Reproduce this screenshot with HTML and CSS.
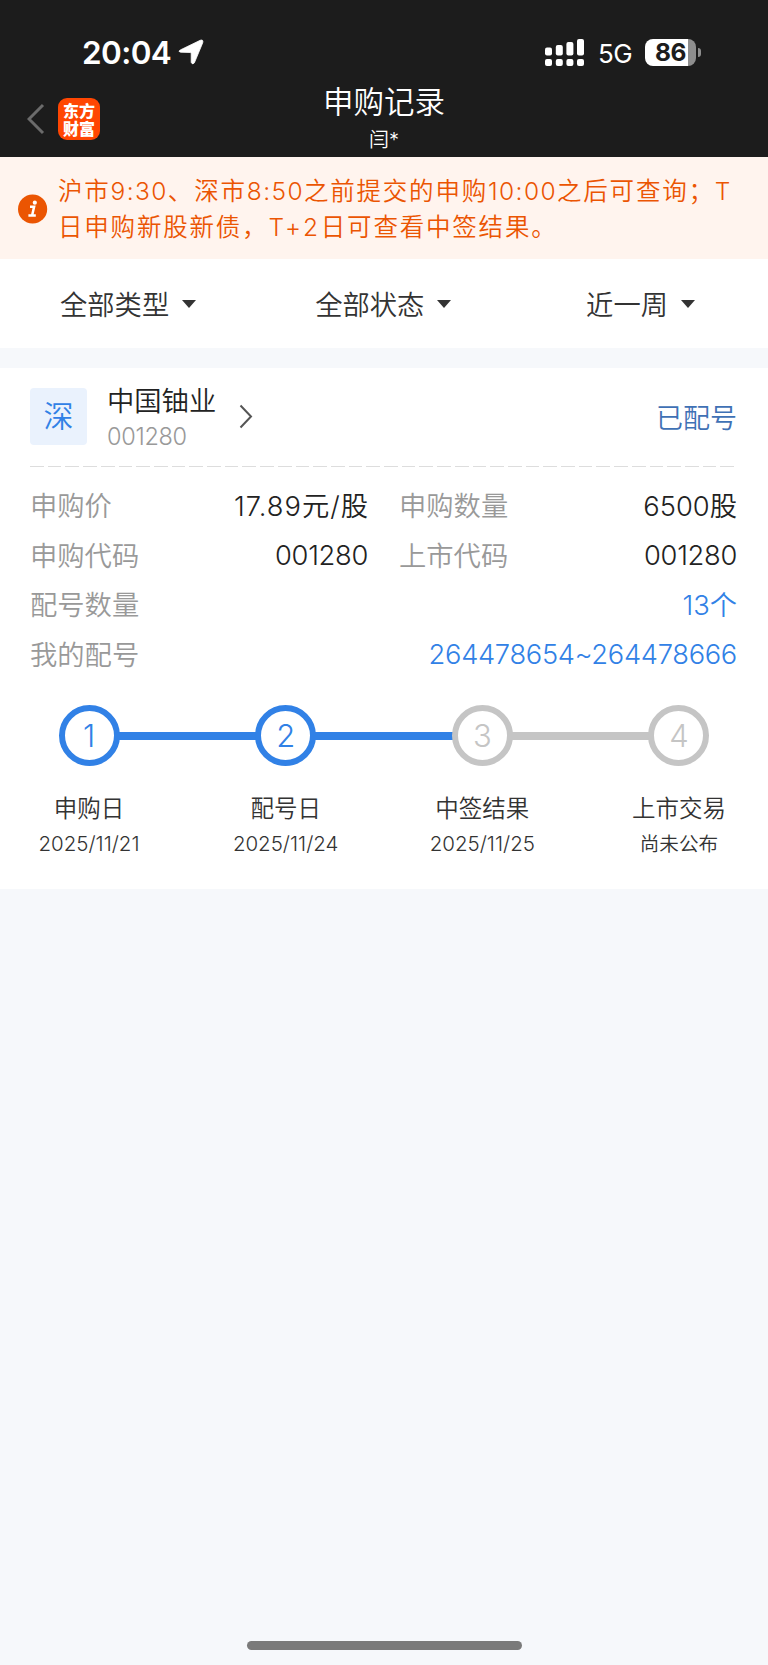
FILE: index.html
```html
<!DOCTYPE html>
<html lang="zh-CN">
<head>
    <meta charset="UTF-8">
    <meta name="viewport" content="width=device-width, initial-scale=1.0">
    <title>申购记录</title>
    <link rel="stylesheet" href="styles.css">
</head>
<body>
    <header>
        <div class="status-bar">
            <span class="time">20:04</span>
            <svg class="location" width="26" height="26" viewBox="0 0 26 26">
                <path d="M2.2 11 22.2 1.3Q25.6 .2 24.7 3.8L16.4 23.8Q14.6 26.2 13.2 23.4V14.6Q13.2 13.6 12.2 13.5L2.6 13.2Q-.4 12.6 2.2 11Z" fill="#fff" stroke="#fff" stroke-width=".8"/>
            </svg>
            <svg class="signal" width="39" height="27" viewBox="0 0 39 27" fill="#fff">
                <rect x="0" y="8.5" width="7" height="8" rx="2"/>
                <rect x="10.8" y="6" width="7" height="10.5" rx="2"/>
                <rect x="21.4" y="3" width="7" height="13.5" rx="2"/>
                <rect x="32" y="0" width="7" height="16.5" rx="2"/>
                <rect x="0" y="20" width="7" height="7" rx="2"/>
                <rect x="10.8" y="20" width="7" height="7" rx="2"/>
                <rect x="21.4" y="20" width="7" height="7" rx="2"/>
                <rect x="32" y="20" width="7" height="7" rx="2"/>
            </svg>
            <span class="network">5G</span>
            <span class="battery">86</span>
            <span class="battery-tip"></span>
        </div>
        <div class="title-bar">
            <div class="title-left">
                <svg width="18" height="32" viewBox="0 0 18 32">
                    <path d="M16 2 2 16 16 30" fill="none" stroke="#6b6b6b" stroke-width="3"/>
                </svg>
                <div class="logo">东方<br>财富</div>
            </div>
            <div class="title">
                <h1>申购记录</h1>
                <p>闫*</p>
            </div>
        </div>
    </header>

    <div class="notice">
        <svg width="30" height="30" viewBox="0 0 30 30">
            <circle cx="14.6" cy="15" r="14.6" fill="#eb5502"/>
            <circle cx="16.8" cy="8.7" r="2.1" fill="#fff"/>
            <path d="M12 12.8H16.1L14.1 21.5M10.4 21.6H17.8" fill="none" stroke="#fff" stroke-width="2.5"/>
        </svg>
        <p>沪市<span class="num">9:30</span>、深市<span class="num">8:50</span>之前提交的申购<span class="num">10:00</span>之后可查询；T<br>日申购新股新债，<span class="day">T+2</span>日可查看中签结果。</p>
    </div>

    <div class="filters">
        <div class="filter">全部类型<i></i></div>
        <div class="filter">全部状态<i></i></div>
        <div class="filter">近一周<i></i></div>
    </div>

    <div class="card">
        <div class="stock">
            <div class="market">深</div>
            <div class="stock-name">
                <h2>中国铀业</h2>
                <p>001280</p>
            </div>
            <svg width="14" height="25" viewBox="0 0 14 25">
                <path d="M1.5 1.5 12 12.5 1.5 23.5" fill="none" stroke="#555" stroke-width="2"/>
            </svg>
            <div class="state">已配号</div>
        </div>
        <div class="divider"></div>
        <div class="details">
            <div class="row"><span class="label">申购价</span><span class="value price">17.89元/股</span></div>
            <div class="row"><span class="label">申购数量</span><span class="value">6500股</span></div>
            <div class="row"><span class="label">申购代码</span><span class="value code">001280</span></div>
            <div class="row"><span class="label">上市代码</span><span class="value code">001280</span></div>
            <div class="row wide"><span class="label">配号数量</span><span class="value blue">13个</span></div>
            <div class="row wide"><span class="label">我的配号</span><span class="value code blue">264478654~264478666</span></div>
        </div>
        <div class="steps">
            <div class="step done">
                <div class="circle">1</div>
                <h3>申购日</h3>
                <p>2025/11/21</p>
            </div>
            <div class="step done">
                <div class="circle">2</div>
                <h3>配号日</h3>
                <p>2025/11/24</p>
            </div>
            <div class="step">
                <div class="circle">3</div>
                <h3>中签结果</h3>
                <p>2025/11/25</p>
            </div>
            <div class="step">
                <div class="circle">4</div>
                <h3>上市交易</h3>
                <p class="pending">尚未公布</p>
            </div>
        </div>
    </div>

    <div class="home-bar"></div>
</body>
</html>
```
FILE: styles.css
```css
* {
    box-sizing: border-box;
}
body {
    font-family: Inter, "Noto Sans CJK SC", sans-serif;
    font-weight: 350;
    background-color: #f6f8fb;
    color: #333;
    margin: 0;
    height: 1665px;
    display: flex;
    flex-direction: column;
}
h1, h2, h3, p {
    margin: 0;
    font-weight: inherit;
}
svg {
    display: block;
    flex-shrink: 0;
}
header {
    background-color: #1c1c1c;
    color: #fff;
    height: 157px;
    padding-top: 32px;
}
.status-bar {
    display: flex;
    align-items: center;
    height: 40px;
    padding: 0 67px 0 82px;
}
.time {
    font-size: 31.5px;
    font-weight: 600;
    width: 96px;
    letter-spacing: -0.6px;
}
.signal {
    margin-left: auto;
}
.network {
    width: 47px;
    padding: 2px 0 0 14px;
    font-size: 26px;
    font-weight: 400;
    letter-spacing: -0.5px;
}
.battery {
    width: 51px;
    height: 27px;
    margin-left: 14px;
    border-radius: 8px;
    background: linear-gradient(to right, #fff 43px, #8e8e8e 43px);
    color: #1c1c1c;
    font-size: 24.5px;
    font-weight: 700;
    line-height: 27px;
    text-align: center;
    letter-spacing: -0.5px;
}
.battery-tip {
    width: 3px;
    height: 9px;
    margin-left: 2px;
    border-radius: 0 4px 4px 0;
    background-color: #8e8e8e;
}
.title-bar {
    display: grid;
    grid-template-columns: 1fr auto 1fr;
    height: 85px;
}
.title-left {
    display: flex;
    align-items: center;
    gap: 13px;
    padding: 8px 0 0 27px;
    height: 85px;
}
.logo {
    width: 42px;
    height: 42px;
    border-radius: 9px;
    background-color: #ff4602;
    font-family: "Noto Sans CJK SC", sans-serif;
    font-size: 16px;
    font-weight: 900;
    line-height: 18px;
    padding-top: 3px;
    text-align: center;
}
.title {
    text-align: center;
    padding-top: 10px;
}
.title h1 {
    font-size: 30.5px;
    line-height: 40px;
}
.title p {
    font-size: 20px;
    line-height: 36px;
}
.notice {
    display: flex;
    align-items: center;
    gap: 10px;
    height: 102px;
    padding: 1px 0 0 18px;
    background-color: #fff4ee;
    color: #eb5502;
}
.notice p {
    font-size: 24.5px;
    line-height: 36px;
    letter-spacing: 1.8px;
    white-space: nowrap;
}
.notice .num {
    letter-spacing: 1.4px;
}
.notice .day {
    letter-spacing: 2.8px;
}
.filters {
    display: flex;
    align-items: center;
    height: 89px;
    padding: 0 73px 2px 60px;
    background-color: #fff;
}
.filter {
    display: flex;
    align-items: center;
    font-size: 27.3px;
    margin-right: 119px;
}
.filter:last-child {
    margin: 0 0 0 auto;
}
.filter i {
    margin-left: 13px;
    margin-top: 2px;
    border: 7px solid transparent;
    border-top: 8px solid #333;
    border-bottom: 0;
}
.card {
    height: 521px;
    margin-top: 20px;
    padding: 20px 31px 0 30px;
    background-color: #fff;
}
.stock {
    display: flex;
    align-items: center;
    height: 57px;
}
.market {
    width: 57px;
    height: 57px;
    border-radius: 4px;
    background-color: #eaf2fd;
    color: #3181e6;
    font-size: 30px;
    line-height: 57px;
    text-align: center;
}
.stock-name {
    width: 133px;
    margin-left: 20px;
    margin-right: -1px;
    padding-top: 4px;
}
.stock-name h2 {
    font-size: 27.3px;
    line-height: 36px;
    color: #222;
}
.stock-name p {
    font-size: 23.5px;
    line-height: 34px;
    letter-spacing: -0.3px;
    color: #999;
}
.state {
    margin-left: auto;
    font-size: 27px;
    color: #3f71b5;
}
.divider {
    height: 1px;
    margin: 21px 3px 0 0;
    background: repeating-linear-gradient(to right, #ddd 0 13.7px, transparent 13.7px 17.7px);
}
.details {
    display: grid;
    grid-template-columns: 338px 338px;
    grid-auto-rows: 49.8px;
    column-gap: 31px;
    padding-top: 14px;
}
.row {
    display: flex;
    justify-content: space-between;
    align-items: center;
}
.row.wide {
    grid-column: span 2;
}
.label {
    padding-bottom: 4px;
    font-size: 27.3px;
    color: #999;
}
.value {
    padding-bottom: 4px;
    font-size: 27.3px;
    color: #222;
}
.value.price {
    letter-spacing: 1px;
    margin-right: -1px;
}
.value.code {
    padding-bottom: 1px;
    letter-spacing: -0.3px;
}
.value.blue {
    color: #3181e6;
}
.steps {
    display: flex;
    justify-content: space-between;
    margin: 25px 3px 0 4px;
}
.step {
    position: relative;
    width: 110px;
    text-align: center;
    white-space: nowrap;
}
.circle {
    width: 61px;
    height: 61px;
    margin: 0 auto;
    border: 6px solid #c5c5c5;
    border-radius: 50%;
    color: #c5c5c5;
    font-size: 31px;
    font-weight: 300;
    line-height: 50px;
}
/* line to the next step */
.step:not(:last-child)::after {
    content: "";
    position: absolute;
    top: 27px;
    left: 84px;
    width: 138px;
    height: 8px;
    background-color: #c5c5c5;
}
.done .circle {
    border-color: #3181e6;
    color: #3181e6;
}
.step.done::after {
    background-color: #3181e6;
}
.step h3 {
    margin-top: 25px;
    font-size: 23.5px;
    line-height: 36px;
}
.step p {
    font-size: 20.5px;
    line-height: 34px;
}
.step .pending {
    font-size: 19.6px;
}
.home-bar {
    width: 275px;
    height: 9px;
    margin: auto auto 15px;
    border-radius: 5px;
    background-color: #7a7a7a;
}
```
